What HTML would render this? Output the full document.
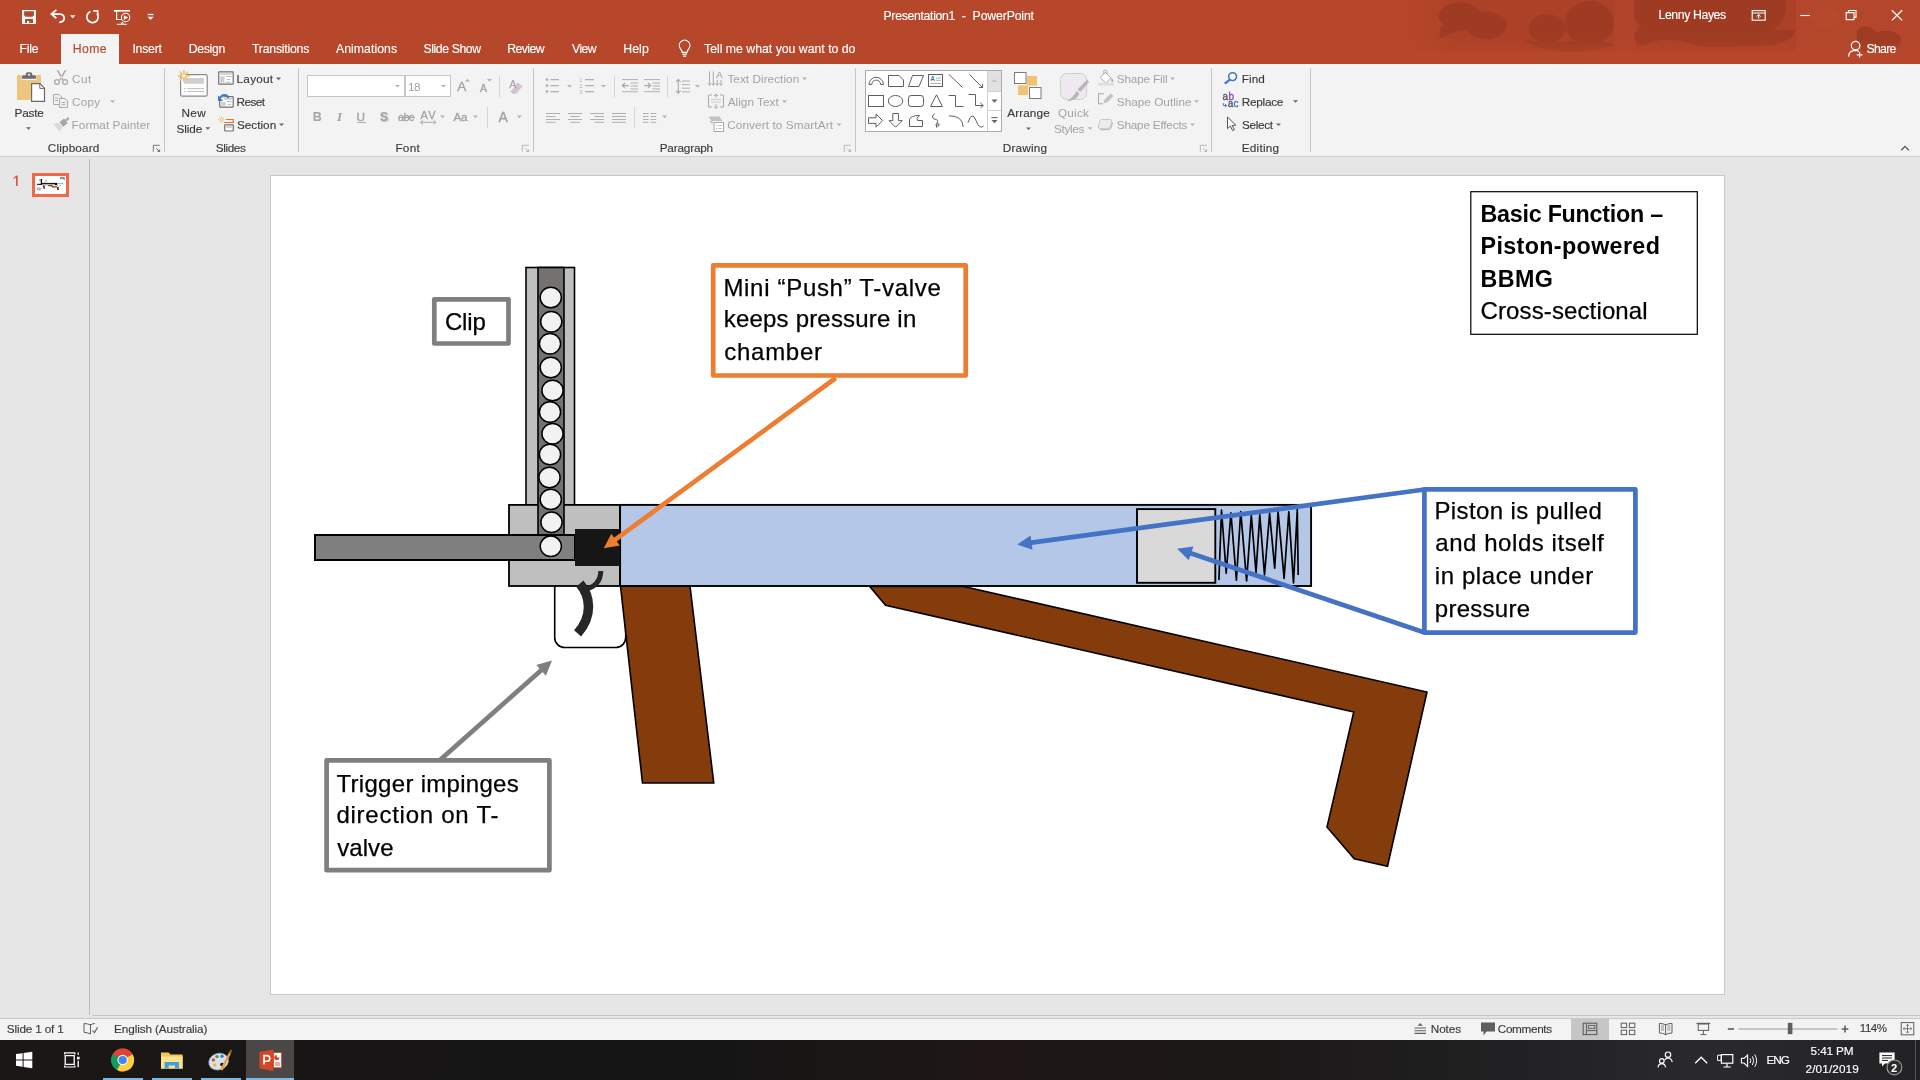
<!DOCTYPE html>
<html><head><meta charset="utf-8"><title>Presentation1 - PowerPoint</title>
<style>
html,body{margin:0;padding:0;background:#e6e6e6;}
body{width:1920px;height:1080px;overflow:hidden;position:relative;font-family:"Liberation Sans",sans-serif;}
#app{position:absolute;left:0;top:0;width:1920px;height:1080px;overflow:hidden;background:#e6e6e6;}
.t{position:absolute;white-space:pre;line-height:20px;height:20px;}
.r{position:absolute;}
#tx{position:absolute;left:0;top:0;width:1920px;height:1080px;will-change:transform;}
svg.ov{position:absolute;left:0;top:0;width:1920px;height:1080px;overflow:visible;}
</style></head><body><div id="app">
<div class="r" style="left:0px;top:0px;width:1920px;height:64px;background:#B7472A;"></div>
<svg class="ov" viewBox="0 0 1920 1080">
<defs>
<linearGradient id="bgf" x1="0" y1="0" x2="1" y2="0"><stop offset="0" stop-color="#AD4127" stop-opacity="0"/><stop offset="1" stop-color="#AD4127" stop-opacity="1"/></linearGradient>
<linearGradient id="vf" x1="0" y1="0" x2="0" y2="1"><stop offset="0" stop-color="#B7472A" stop-opacity="0"/><stop offset="0.72" stop-color="#B7472A" stop-opacity="0"/><stop offset="1" stop-color="#B7472A" stop-opacity="0.45"/></linearGradient>
<clipPath id="tb"><rect x="1380" y="0" width="540" height="51.4"/></clipPath></defs>
<g clip-path="url(#tb)">
<rect x="1400" y="0" width="60" height="52" fill="url(#bgf)"/>
<rect x="1460" y="0" width="460" height="52" fill="#AD4127"/>
<rect x="1614" y="0" width="22" height="52" fill="#B1442A"/>
<rect x="1796" y="0" width="124" height="52" fill="#B4472B"/>
<filter id="sb" x="-5%" y="-20%" width="110%" height="140%"><feGaussianBlur stdDeviation="0.7"/></filter><g fill="#9E3A24" filter="url(#sb)">
<ellipse cx="1460" cy="16.5" rx="21" ry="14.2"/><ellipse cx="1486" cy="25.3" rx="21" ry="13.6"/><path d="M1441 26 L1439.4 38.6 L1458 31Z"/>
<ellipse cx="1547" cy="28.6" rx="18.5" ry="14.4"/><ellipse cx="1589.5" cy="23" rx="24.5" ry="22"/><path d="M1524 39 Q1540 44 1560 42 L1600 40 L1614 45 Q1590 53 1560 51 Q1535 50 1524 39Z"/>
<path d="M1634 0 H1786 Q1788 20 1773 30 L1795 30 Q1792 44 1760 46.5 L1700 47 Q1680 38 1660 40 L1637 47 L1634 34 L1641 26 L1634 18Z"/>
<path d="M1856.5 36 Q1856 26 1866 26.4 Q1873 27 1876 32.6 Q1882 30 1890 31 Q1901.5 33 1901 42 Q1899 50 1886 52 L1864 52 Q1857 44 1856.5 36Z"/>
</g>
<ellipse cx="1826" cy="17" rx="14" ry="10" fill="#B94D30" opacity="0.4"/>
<rect x="1380" y="0" width="540" height="52" fill="url(#vf)"/>
</g></svg>
<div class="r" style="left:61px;top:34px;width:58px;height:30px;background:#F3F3F3;"></div>
<svg class="ov" viewBox="0 0 1920 1080" fill="none" stroke="#fff" stroke-width="1.3">
<!-- save -->
<path fill="#fff" stroke="none" fill-rule="evenodd" d="M22 10 H36 V23.2 Q36 24 35.2 24 H22.8 Q22 24 22 23.2Z M24.1 11.2 V15.8 H25.1 V16.8 H32.9 V15.8 H33.9 V11.2Z M25 19 V22.9 H27 V20.9 H29.1 V22.9 H33 V19Z"/>
<!-- undo -->
<path d="M51.6 14.1 H60 Q64.2 14.4 64.2 18.3 Q64.2 22 59.2 22.3" stroke-width="1.8"/>
<path d="M56.4 9.9 L51.4 14.1 L56.4 18.3" stroke-width="1.8"/>
<path d="M70 15.2 H75.4 L72.7 18.2Z" fill="#fff" stroke="none"/>
<!-- redo -->
<path d="M90.4 11.6 A5.7 5.7 0 1 0 97 13.4" stroke-width="1.7"/>
<path d="M93.2 10.9 H97.7 V15.4" stroke-width="1.6"/>
<!-- present from beginning -->
<path d="M113.9 10.8 H130" stroke-width="1.6"/>
<path d="M116.6 11 V19.5 H121.2" stroke-width="1.2"/>
<path d="M116.9 24.3 H127 M121 24.3 L122.3 22 L123.6 24.3" stroke-width="1"/>
<circle cx="125.6" cy="17.5" r="4.2" stroke-width="1.1"/>
<path d="M123.9 15.2 L128.2 17.5 L123.9 19.8Z" fill="#fff" stroke="none"/>
<!-- customize qat -->
<path d="M147.7 14.5 H153.4" stroke-width="1.3"/>
<path d="M147.5 16.8 H153.6 L150.55 20.1Z" fill="#fff" stroke="none"/>
<!-- bulb -->
<path d="M682.2 52.4 Q682 50.4 680.6 49 A5.3 5.3 0 1 1 688.6 49 Q687.2 50.4 687 52.4 Z" stroke-width="1.2"/>
<path d="M682.2 54.1 H687 M683 56.2 H686.2" stroke-width="1.2"/>
<!-- ribbon display options -->
<rect x="1752.2" y="10.6" width="13" height="9.6" stroke-width="1.1"/>
<path d="M1752.2 13 H1765.2 M1758.7 18.6 V14.6 M1756.6 16.6 L1758.7 14.5 L1760.8 16.6" stroke-width="1"/>
<!-- min -->
<path d="M1800.3 15.5 H1810" stroke-width="1.1"/>
<!-- restore -->
<path d="M1846.2 12.6 H1854 V19.6 H1846.2Z M1848.4 12.6 V10.5 H1856 V17.4 H1854" stroke-width="1.1"/>
<!-- close -->
<path d="M1891.8 10.2 L1902.2 20.4 M1902.2 10.2 L1891.8 20.4" stroke-width="1.2"/>
<!-- share person -->
<circle cx="1855.6" cy="45.6" r="4.3" stroke-width="1.2"/>
<path d="M1848.6 56.6 Q1849 50.6 1855 50.4 Q1857.6 50.4 1859 51.6" stroke-width="1.2"/>
<path d="M1859.6 52.2 V57.6 M1856.8 54.9 H1862.4" stroke-width="1.2"/>
</svg>
<div class="r" style="left:0px;top:64px;width:1920px;height:92px;background:#F3F3F3;"></div>
<div class="r" style="left:0px;top:156px;width:1920px;height:1px;background:#D2D2D2;"></div>
<div class="r" style="left:164px;top:68px;width:1px;height:84px;background:#C6C6C6;"></div>
<div class="r" style="left:298px;top:68px;width:1px;height:84px;background:#C6C6C6;"></div>
<div class="r" style="left:533px;top:68px;width:1px;height:84px;background:#C6C6C6;"></div>
<div class="r" style="left:855px;top:68px;width:1px;height:84px;background:#C6C6C6;"></div>
<div class="r" style="left:1211px;top:68px;width:1px;height:84px;background:#C6C6C6;"></div>
<div class="r" style="left:1310px;top:68px;width:1px;height:84px;background:#C6C6C6;"></div>
<div class="r" style="left:499px;top:76px;width:1px;height:21px;background:#D4D4D4;"></div>
<div class="r" style="left:487px;top:107px;width:1px;height:21px;background:#D4D4D4;"></div>
<div class="r" style="left:614px;top:76px;width:1px;height:21px;background:#D4D4D4;"></div>
<div class="r" style="left:667px;top:76px;width:1px;height:21px;background:#D4D4D4;"></div>
<div class="r" style="left:634px;top:107px;width:1px;height:21px;background:#D4D4D4;"></div>
<div class="r" style="left:307px;top:75px;width:98px;height:22px;background:#fff;border:1px solid #C6C6C6;box-sizing:border-box;"></div>
<div class="r" style="left:405px;top:75px;width:46px;height:22px;background:#fff;border:1px solid #C6C6C6;box-sizing:border-box;"></div>
<div class="r" style="left:357px;top:122px;width:9px;height:1px;background:#ADADAD;"></div>
<div class="r" style="left:398px;top:117.2px;width:16.5px;height:1px;background:#A3A3A3;"></div>
<div class="r" style="left:865px;top:70px;width:137px;height:62px;background:#fff;border:1px solid #ABABAB;box-sizing:border-box;"></div>
<div class="r" style="left:987px;top:71px;width:14px;height:20px;background:#E1E1E1;"></div>
<div class="r" style="left:987px;top:71px;width:1px;height:60px;background:#D0D0D0;"></div>
<div class="r" style="left:988px;top:91px;width:13px;height:1px;background:#D0D0D0;"></div>
<div class="r" style="left:988px;top:110px;width:13px;height:1px;background:#D0D0D0;"></div>
<svg class="ov" viewBox="0 0 1920 1080" fill="none" stroke-linejoin="miter">
<path d="M26 127.2 H31 L28.5 129.82Z" fill="#666" stroke="none"/>
<path d="M205.3 127.2 H210.3 L207.8 129.82Z" fill="#666" stroke="none"/>
<path d="M276 77.6 H281 L278.5 80.22Z" fill="#666" stroke="none"/>
<path d="M279 123.5 H284 L281.5 126.12Z" fill="#666" stroke="none"/>
<path d="M1026 127.4 H1031 L1028.5 130.03Z" fill="#666" stroke="none"/>
<path d="M1293 100.2 H1298 L1295.5 102.83Z" fill="#666" stroke="none"/>
<path d="M1276 123.5 H1281 L1278.5 126.12Z" fill="#666" stroke="none"/>
<path d="M110 100.3 H115 L112.5 102.92Z" fill="#B4B4B4" stroke="none"/>
<path d="M395 85 H400 L397.5 87.62Z" fill="#B4B4B4" stroke="none"/>
<path d="M441 85 H446 L443.5 87.62Z" fill="#B4B4B4" stroke="none"/>
<path d="M440 115.6 H445 L442.5 118.22Z" fill="#B4B4B4" stroke="none"/>
<path d="M473 115.6 H478 L475.5 118.22Z" fill="#B4B4B4" stroke="none"/>
<path d="M517 115.6 H522 L519.5 118.22Z" fill="#B4B4B4" stroke="none"/>
<path d="M567 85 H572 L569.5 87.62Z" fill="#B4B4B4" stroke="none"/>
<path d="M601 85 H606 L603.5 87.62Z" fill="#B4B4B4" stroke="none"/>
<path d="M695 85 H700 L697.5 87.62Z" fill="#B4B4B4" stroke="none"/>
<path d="M662 115.6 H667 L664.5 118.22Z" fill="#B4B4B4" stroke="none"/>
<path d="M802 77.6 H807 L804.5 80.22Z" fill="#B4B4B4" stroke="none"/>
<path d="M782 100.3 H787 L784.5 102.92Z" fill="#B4B4B4" stroke="none"/>
<path d="M836.5 123.5 H841.5 L839.0 126.12Z" fill="#B4B4B4" stroke="none"/>
<path d="M1087.7 127.2 H1092.7 L1090.2 129.82Z" fill="#B4B4B4" stroke="none"/>
<path d="M1170 77.6 H1175 L1172.5 80.22Z" fill="#B4B4B4" stroke="none"/>
<path d="M1194 100.3 H1199 L1196.5 102.92Z" fill="#B4B4B4" stroke="none"/>
<path d="M1190 123.5 H1195 L1192.5 126.12Z" fill="#B4B4B4" stroke="none"/>
<path d="M153.3 151.8 V145.3 H159.8" stroke="#777" stroke-width="1"/><path d="M156.3 148.3 L159.60000000000002 151.60000000000002" stroke="#777" stroke-width="1"/><path d="M156.9 152.10000000000002 H160.10000000000002 V148.9Z" fill="#777" stroke="none"/>
<path d="M522.3 151.8 V145.3 H528.8" stroke="#B8B8B8" stroke-width="1"/><path d="M525.3 148.3 L528.5999999999999 151.60000000000002" stroke="#B8B8B8" stroke-width="1"/><path d="M525.9 152.10000000000002 H529.0999999999999 V148.9Z" fill="#B8B8B8" stroke="none"/>
<path d="M844.3 151.8 V145.3 H850.8" stroke="#B8B8B8" stroke-width="1"/><path d="M847.3 148.3 L850.5999999999999 151.60000000000002" stroke="#B8B8B8" stroke-width="1"/><path d="M847.9 152.10000000000002 H851.0999999999999 V148.9Z" fill="#B8B8B8" stroke="none"/>
<path d="M1200.3 151.8 V145.3 H1206.8" stroke="#B8B8B8" stroke-width="1"/><path d="M1203.3 148.3 L1206.6 151.60000000000002" stroke="#B8B8B8" stroke-width="1"/><path d="M1203.8999999999999 152.10000000000002 H1207.1 V148.9Z" fill="#B8B8B8" stroke="none"/>
<path d="M1901.2 150.2 L1905 146.4 L1908.8 150.2" stroke="#555" stroke-width="1.3"/>
<rect x="17" y="75" width="24" height="25" rx="1.2" fill="#EEC57C" stroke="none"/>
<rect x="21.6" y="75" width="14.8" height="5" fill="#F3F3F3" stroke="none"/>
<path d="M22 78.7 V76.6 Q22 75.3 23.4 75.3 H25.8 V74 Q25.8 72.2 27.6 72.2 H30.4 Q32.2 72.2 32.2 74 V75.3 H34.6 Q36 75.3 36 76.6 V78.7Z" fill="#6E6E6E" stroke="none"/><circle cx="29" cy="74.8" r="1.1" fill="#F3F3F3" stroke="none"/>
<path d="M31.6 83.7 H40 L44.5 88.2 V101.3 H31.6Z" fill="#fff" stroke="#6A6A6A" stroke-width="1.2"/><path d="M39.8 84 V88.4 H44.2" stroke="#6A6A6A" stroke-width="1" fill="none"/>
<path d="M56.6 70.2 L58.4 70.2 L63.6 79.6 L62.4 80.4Z M66.4 70.2 L64.6 70.2 L59.4 79.6 L60.6 80.4Z" fill="#A9A9A9" stroke="none"/>
<g stroke="#A9A9A9" stroke-width="1.3"><circle cx="57" cy="82" r="2.4"/><circle cx="65.1" cy="82" r="2.4"/></g>
<g stroke="#A9A9A9" stroke-width="1"><path d="M53.5 94.5 H59 L61.5 97 V104.5 H53.5Z" fill="#F3F3F3"/><path d="M59.5 98.5 H65 L67.5 101 V107.5 H59.5Z" fill="#F3F3F3"/><path d="M55 98 H58 M55 100.5 H58 M61.5 102.5 H65.5 M61.5 104.8 H65.5"/></g>
<path d="M64.6 119.9 L68 116.9 L69.6 118.8 L66.3 121.8Z" fill="#ADADAD" stroke="none"/><path d="M59.5 122.2 L64 118.6 L67.6 123.2 L63.1 126.8Z" fill="#A6A6A6" stroke="none"/><path d="M58.7 122.9 L62.7 127.7 L59.4 131.4 L53.2 123.4Z" fill="#DBD7DB" stroke="none"/>
<rect x="180.6" y="74.7" width="26.6" height="21.4" rx="1.6" fill="#fff" stroke="#8A8A8A" stroke-width="1.2"/>
<rect x="183.9" y="78" width="20.1" height="5.8" fill="#D0D0D0" stroke="none"/>
<path d="M184 88.6 H185.8 M187.2 88.6 H204 M184 91.4 H185.8 M187.2 91.4 H204" stroke="#BEBEBE" stroke-width="1"/>
<g stroke="#EEC37B" stroke-width="1.7"><path d="M183.9 69.9 V81.8 M178 75.85 H189.8 M179.7 71.65 L188.1 80.05 M188.1 71.65 L179.7 80.05"/></g><circle cx="183.9" cy="75.85" r="1.7" fill="#FAF6EE" stroke="none"/>
<rect x="218.7" y="71.9" width="14.5" height="12.3" rx="0.6" fill="#fff" stroke="#707070" stroke-width="1.2"/><rect x="220.2" y="73.3" width="11.6" height="1.5" fill="#C8C8C8" stroke="none"/><rect x="220.2" y="76.3" width="4.4" height="6.4" fill="#CFCFCF" stroke="none"/><path d="M226 76.6 H231.8 M226.6 79.6 H230 M226 82.3 H230.4" stroke="#B0B0B0" stroke-width="0.9"/>
<rect x="219.7" y="96.7" width="13.5" height="10.4" rx="0.6" fill="#fff" stroke="#707070" stroke-width="1.2"/><rect x="224" y="98.1" width="8" height="1.5" fill="#C8C8C8" stroke="none"/><rect x="221" y="101.8" width="4.6" height="3.9" fill="#CFCFCF" stroke="none"/><path d="M227 101.6 H231.8 M227.6 104.4 H231" stroke="#B0B0B0" stroke-width="0.9"/>
<path d="M217.6 94.6 H224.6 V96.4 H217.6Z" fill="#F3F3F3" stroke="none"/><path d="M228.4 98 Q227.6 94.9 224.4 94.9 Q221 95.1 220 98.6" stroke="#3E7BC4" stroke-width="1.8" fill="none"/><path d="M218 95.6 V100.9 H223.2Z" fill="#3E7BC4" stroke="none"/>
<g stroke="#EEC37B" stroke-width="0.9"><path d="M221.5 116.3 V122.9 M218.2 119.6 H224.8 M219.2 117.3 L223.8 121.9 M223.8 117.3 L219.2 121.9"/></g><circle cx="221.5" cy="119.6" r="0.9" fill="#FAF6EE" stroke="none"/>
<path d="M226 119.5 H233.3 V122.5 H224.2" stroke="#E8722A" stroke-width="1.2" fill="none"/><rect x="224.7" y="124.9" width="8.6" height="6.1" rx="0.5" fill="#fff" stroke="#707070" stroke-width="1.2"/><rect x="226.2" y="126.3" width="5.6" height="1.6" fill="#C8C8C8" stroke="none"/>
<path d="M465 81.6 H470 L467.5 78.8Z" fill="#B4B4B4" stroke="none"/>
<path d="M487 79 H492 L489.5 81.8Z" fill="#B4B4B4" stroke="none"/>
<path d="M511.6 90.2 L517.6 82.6 L522.6 86 L516.6 93.6 H513Z" fill="#D3BFD0" stroke="none" opacity="0.9"/><path d="M510.8 91 L514.6 93.8" stroke="#C9B6C8" stroke-width="1.2"/>
<path d="M420.5 122.3 H436 M423 120 L420.6 122.3 L423 124.6 M433.5 120 L435.9 122.3 L433.5 124.6" stroke="#A9A9A9" stroke-width="1"/>
<g fill="#B0B0B0" stroke="none"><circle cx="547" cy="79.6" r="1.4"/><circle cx="547" cy="85.6" r="1.4"/><circle cx="547" cy="91.6" r="1.4"/></g>
<path d="M550.5 79.6 H559 M550.5 85.6 H559 M550.5 91.6 H559" stroke="#B0B0B0" stroke-width="1.1"/>
<g fill="#A9A9A9" stroke="none" font-family="Liberation Sans" font-size="5"><text x="579.6" y="81.6">1</text><text x="579.6" y="87.6">2</text><text x="579.6" y="93.6">3</text></g>
<path d="M585 79.6 H594 M585 85.6 H594 M585 91.6 H594" stroke="#B0B0B0" stroke-width="1.1"/>
<path d="M622 79.6 H638 M630.5 83 H638 M630.5 86 H638 M630.5 89 H638 M622 91.7 H638" stroke="#B0B0B0" stroke-width="1"/><path d="M622.4 85.6 H628.6 M625 83 L622.4 85.6 L625 88.2" stroke="#A9A9A9" stroke-width="1.2"/>
<path d="M644 79.6 H660 M652.5 83 H660 M652.5 86 H660 M652.5 89 H660 M644 91.7 H660" stroke="#B0B0B0" stroke-width="1"/><path d="M644.4 85.6 H650.6 M648 83 L650.6 85.6 L648 88.2" stroke="#A9A9A9" stroke-width="1.2"/>
<path d="M682 81 H690 M682 84.6 H690 M682 88.2 H690 M682 91.8 H690" stroke="#B0B0B0" stroke-width="1"/><path d="M678.3 79.6 V93 M676 82 L678.3 79.4 L680.6 82 M676 90.6 L678.3 93.2 L680.6 90.6" stroke="#A9A9A9" stroke-width="1.1"/>
<path d="M546 113.5 H560 M546 116.5 H555.5 M546 119.5 H560 M546 122.3 H555.5 " stroke="#B0B0B0" stroke-width="1"/>
<path d="M568.0 113.5 H582.0 M570.25 116.5 H579.75 M568.0 119.5 H582.0 M570.25 122.3 H579.75 " stroke="#B0B0B0" stroke-width="1"/>
<path d="M590 113.5 H604 M594.5 116.5 H604.0 M590 119.5 H604 M594.5 122.3 H604.0 " stroke="#B0B0B0" stroke-width="1"/>
<path d="M612 113.5 H626 M612 116.5 H626 M612 119.5 H626 M612 122.3 H626 " stroke="#B0B0B0" stroke-width="1"/>
<path d="M643 113.5 H648.6 M650.6 113.5 H656.2 M643 116.5 H648.6 M650.6 116.5 H656.2 M643 119.5 H648.6 M650.6 119.5 H656.2 M643 122.3 H648.6 M650.6 122.3 H656.2" stroke="#B0B0B0" stroke-width="1"/>
<path d="M709.5 71.5 V85 M713.3 71.5 V85 M717.2 80 V85 M721 80 V85" stroke="#A9A9A9" stroke-width="1"/><path d="M708 83.4 L709.5 85.4 L711 83.4 M711.8 83.4 L713.3 85.4 L714.8 83.4 M715.7 83.4 L717.2 85.4 L718.7 83.4 M719.5 83.4 L721 85.4 L722.5 83.4" stroke="#A9A9A9" stroke-width="0.9"/>
<path d="M712 95 H708.5 V107 H712 M720 95 H723.5 V107 H720" stroke="#A9A9A9" stroke-width="1"/><path d="M711 99.5 H721 M711 102 H721" stroke="#D6C6D6" stroke-width="1"/><path d="M716 94 V98 M714 96 L716 94 L718 96 M716 104 V108.4 M714 106.4 L716 108.4 L718 106.4" stroke="#A9A9A9" stroke-width="1"/>
<path d="M708.5 116.5 H719.5 L722.5 121 H711.5Z" fill="#C2C2C2" stroke="none"/><path d="M709 121 L712.6 124.6 V121Z" fill="#C2C2C2" stroke="none"/><rect x="714" y="122.5" width="9.5" height="9" fill="#fff" stroke="#A9A9A9" stroke-width="1"/><path d="M716 125.5 H717 M718.5 125.5 H721.6 M716 128.5 H717 M718.5 128.5 H721.6" stroke="#C8A8C8" stroke-width="1"/>
<g stroke="#5F5F5F" stroke-width="1">
<path d="M869 84.5 A7.2 7.2 0 0 1 883.4 84.5 H880.6 A4.4 4.4 0 0 0 871.8 84.5Z"/>
<path d="M888.5 75.5 H899 L903.5 80 V86.5 H888.5Z"/>
<path d="M912.5 75.5 H923.5 L919 86.5 H908.5Z"/>
<rect x="928.5" y="74.5" width="14" height="12"/>
<path d="M949 74.5 L962.5 87.5"/>
<path d="M969.5 74.5 L982.5 87.5 M979 87.5 H982.6 V84"/>
<rect x="868.5" y="95.5" width="15" height="11"/>
<ellipse cx="895.5" cy="101" rx="7.2" ry="5.5"/>
<rect x="908.5" y="95.5" width="15" height="11" rx="2.6"/>
<path d="M936.5 94.8 L942.5 106.5 H930.5Z"/>
<path d="M948.5 95.5 H955.5 V106.5 H963.5"/>
<path d="M968.5 94.5 H975.5 V105.5 H983 M980.5 103 L983.3 105.5 L980.5 108"/>
<path d="M868.5 117.8 H876 V114 L882.6 120.6 L876 127.2 V123.4 H868.5Z"/>
<path d="M892.8 113.5 H898.4 V120.6 H902.2 L895.6 127.2 L889 120.6 H892.8Z"/>
<path d="M909.5 126.5 V119.5 Q910.5 115.5 919.5 115.5 Q915.5 118.5 917.5 120.5 H922.5 V126.5Z"/>
<path d="M934.5 113.5 Q930 118 935 119.2 Q939.5 120 936.6 123.5 Q934.8 126 937.8 126.2 Q940 125.6 938.8 123.8 Q937 122.8 936.6 125 V127.6"/>
<path d="M949 115.8 Q962.8 115.8 963.2 127"/>
<path d="M968 122.6 Q972 110 976 120.6 Q979.5 130 983.6 126"/>
</g>
<text x="930.2" y="81.4" font-size="6.5" font-weight="bold" fill="#3B78C3" stroke="none" font-family="Liberation Sans">A</text><path d="M936 78 H941 M936 80.3 H941 M930.5 83.5 H941" stroke="#9A9A9A" stroke-width="0.8"/>
<path d="M991.6 82 H997.4 L994.5 79Z" fill="#C3C3C3" stroke="none"/>
<path d="M991.4 99.6 H997.6 L994.5 102.8Z" fill="#666" stroke="none"/>
<path d="M991.4 117.6 H997.6" stroke="#666" stroke-width="1.1"/><path d="M991.4 120 H997.6 L994.5 123.2Z" fill="#666" stroke="none"/>
<rect x="1027" y="76" width="10" height="9.6" fill="#EEC371" stroke="none"/><rect x="1018" y="85.4" width="10" height="9.6" fill="#EEC371" stroke="none"/>
<rect x="1014.5" y="72.5" width="11.5" height="11" fill="#fff" stroke="#7A7A7A" stroke-width="1"/><rect x="1029.5" y="87.5" width="11.5" height="11" fill="#fff" stroke="#7A7A7A" stroke-width="1"/>
<rect x="1060.5" y="73.5" width="26" height="26" rx="6" fill="#EFEAF0" stroke="#CFCFCF" stroke-width="1"/>
<path d="M1089 82 L1080.5 92 L1077.5 89.5 L1087 79.5Z" fill="#B7B7B7" stroke="none"/><path d="M1076.4 91 L1079.4 93.6 Q1077 100.6 1066.5 101.4 Q1073.5 97.5 1076.4 91Z" fill="#B7B7B7" stroke="none"/>
<path d="M1100.2 77.6 L1105.4 72.4 L1111.2 78.2 L1106 83.4Z" stroke="#A9A9A9" stroke-width="1" fill="#fff"/><path d="M1103.8 74 V70.6 Q1105.6 69.4 1107 71.2 V74" stroke="#A9A9A9" stroke-width="0.9"/><path d="M1111.6 78 Q1114.4 80.6 1112.6 82.6 Q1110.6 81 1111.6 78Z" fill="#A9A9A9" stroke="none"/><rect x="1098" y="82.8" width="16" height="3" fill="#E4DCE4" stroke="none"/>
<path d="M1104 93.8 H1098.5 V103.8 H1103" stroke="#A9A9A9" stroke-width="1"/><path d="M1103.6 103.2 L1104.6 99.6 L1110.8 93.4 L1113.4 96 L1107.2 102.2Z" fill="#C2C2C2" stroke="none"/>
<path d="M1101.5 119.5 H1110 Q1112.5 119.5 1111.8 122 L1110 127 Q1109.4 128.6 1107.6 128.6 H1100 Q1097.6 128.6 1098.5 126 L1099.6 121.4 Q1100 119.5 1101.5 119.5Z" fill="#EFEAF0" stroke="#C9C9C9" stroke-width="1"/><path d="M1100 129.6 H1108 Q1110.4 129.6 1111 127.6 L1112.6 122.6" stroke="#BDBDBD" stroke-width="1.3"/>
<circle cx="1232.6" cy="76.6" r="3.9" stroke="#3B78C3" stroke-width="1.6" fill="#fff"/><path d="M1229.6 79.8 L1224.8 83.6" stroke="#3B78C3" stroke-width="2.2"/>
<path d="M1223.3 103.2 V105.6 H1226.4 M1224.9 104 L1226.7 105.6 L1224.9 107.2" stroke="#3B78C3" stroke-width="1" fill="none"/>
<path d="M1227.5 117 V128.6 L1230.4 126 L1232.6 130.6 L1234.4 129.8 L1232.2 125.4 L1235.8 125.2Z" fill="#fff" stroke="#555" stroke-width="1"/>
</svg>
<div class="r" style="left:0px;top:157px;width:1920px;height:861px;background:#E6E6E6;"></div>
<div class="r" style="left:89px;top:159px;width:1px;height:856px;background:#BDBDBD;"></div>
<div class="r" style="left:32px;top:173px;width:37px;height:24px;background:#fff;border:3px solid #F0694A;box-sizing:border-box;"></div>
<div class="r" style="left:270px;top:175px;width:1455px;height:820px;background:#fff;border:1px solid #C8C8C8;box-sizing:border-box;"></div>
<svg class="ov" viewBox="0 0 1920 1080" fill="none">
<g shape-rendering="geometricPrecision"><path d="M37 184.4 H42" stroke="#222" stroke-width="1.2"/><path d="M41.4 179 V185" stroke="#111" stroke-width="1.4"/><path d="M39.3 179.4 H40.6 M39.3 180.5 H40.6" stroke="#666" stroke-width="0.7"/><path d="M42 183.6 H57" stroke="#1a1a1a" stroke-width="1.4"/><rect x="55" y="183.2" width="2.1" height="1.9" fill="#000"/><path d="M43 185 H55" stroke="#8FAADC" stroke-width="0.9"/><path d="M57 183.6 H63.2" stroke="#8FAADC" stroke-width="1"/><path d="M63.5 183.5 V186" stroke="#C9D6EE" stroke-width="0.6"/><path d="M43.3 185.4 L44.5 188.8" stroke="#843C0C" stroke-width="1.9"/><path d="M48.2 185.6 H51.6 L52.6 186.8 L57 186.9" stroke="#843C0C" stroke-width="1.2" fill="none"/><path d="M57.9 187 L58 190" stroke="#843C0C" stroke-width="1.9"/><circle cx="57.4" cy="185.6" r="0.5" fill="#4472C4"/><path d="M59.4 185.6 H61" stroke="#999" stroke-width="0.6"/><path d="M44.9 183 L46.3 181.6" stroke="#ED7D31" stroke-width="0.9"/><path d="M45 180.5 H47" stroke="#999" stroke-width="0.6"/><path d="M60 177.4 H64.8 M60 178.6 H64.8 M63.6 179.6 H64.8" stroke="#666" stroke-width="0.8"/><path d="M37 188.2 H41.6 M37 189.3 H40.6" stroke="#777" stroke-width="0.7"/><path d="M37 190.4 H42" stroke="#bbb" stroke-width="0.5"/></g>
<path d="M13.4 178 L16.6 175.5 H17.6 V186 H16.15 V177.3 L13.9 179Z" fill="#D24726"/>
<path d="M869.75 586.5 L963.75 586.5 L1427 692 L1387.5 866.25 L1354.25 858.75 L1327 827 L1353.75 712 L885.6 605.25Z" fill="#843C0C" stroke="#000" stroke-width="1.6" stroke-linejoin="miter"/>
<rect x="554.7" y="578" width="71" height="69.5" rx="10" fill="#fff" stroke="#000" stroke-width="1.6"/>
<path d="M620.5 586 L690 586 L713.75 783 L642.5 783Z" fill="#843C0C" stroke="#000" stroke-width="1.6"/>
<rect x="526" y="267.5" width="48.5" height="250" fill="#BFBFBF" stroke="#000" stroke-width="1.6"/>
<rect x="509" y="504.9" width="111" height="81.1" fill="#BFBFBF" stroke="#000" stroke-width="1.8"/>
<rect x="620.1" y="504.9" width="691" height="81.1" fill="#B4C7E7" stroke="#000" stroke-width="1.9"/>
<rect x="538" y="267.5" width="26" height="269" fill="#767171" stroke="#000" stroke-width="1.6"/>
<rect x="315" y="535" width="260" height="25" fill="#7F7F7F" stroke="#000" stroke-width="2"/>
<ellipse cx="550.75" cy="297.5" rx="10.6" ry="10.2" fill="#F2F2F2" stroke="#000" stroke-width="1.5"/>
<ellipse cx="551.25" cy="321.75" rx="10.6" ry="10.2" fill="#F2F2F2" stroke="#000" stroke-width="1.5"/>
<ellipse cx="550" cy="343.75" rx="10.6" ry="10.2" fill="#F2F2F2" stroke="#000" stroke-width="1.5"/>
<ellipse cx="550.75" cy="367.5" rx="10.6" ry="10.2" fill="#F2F2F2" stroke="#000" stroke-width="1.5"/>
<ellipse cx="552.5" cy="390.5" rx="10.6" ry="10.2" fill="#F2F2F2" stroke="#000" stroke-width="1.5"/>
<ellipse cx="550" cy="412" rx="10.6" ry="10.2" fill="#F2F2F2" stroke="#000" stroke-width="1.5"/>
<ellipse cx="552.5" cy="433.75" rx="10.6" ry="10.2" fill="#F2F2F2" stroke="#000" stroke-width="1.5"/>
<ellipse cx="550" cy="454.5" rx="10.6" ry="10.2" fill="#F2F2F2" stroke="#000" stroke-width="1.5"/>
<ellipse cx="549.5" cy="477.5" rx="10.6" ry="10.2" fill="#F2F2F2" stroke="#000" stroke-width="1.5"/>
<ellipse cx="550.75" cy="499.4" rx="10.6" ry="10.2" fill="#F2F2F2" stroke="#000" stroke-width="1.5"/>
<ellipse cx="551.5" cy="522.3" rx="10.6" ry="10.2" fill="#F2F2F2" stroke="#000" stroke-width="1.5"/>
<ellipse cx="550.8" cy="546.3" rx="10.6" ry="10.2" fill="#F2F2F2" stroke="#000" stroke-width="1.5"/>
<rect x="575" y="529" width="45" height="37" fill="#161616"/>
<path d="M579.8 583.6 C590.5 596 593 616 577.6 633.4" stroke="#262626" stroke-width="9.5" stroke-linecap="butt"/>
<path d="M584.5 589.5 Q600.5 586 600.8 571" stroke="#262626" stroke-width="5" stroke-linecap="butt"/>
<rect x="1137" y="509.1" width="78.3" height="73.7" fill="#D9D9D9" stroke="#000" stroke-width="1.9"/>
<path d="M1218.9 580.1 L1221.5 510.2 L1226.2 573.3 L1230.9 512.8 L1236.4 580.1 L1240.7 511.5 L1246.6 580.9 L1251.3 515.3 L1256.0 572.4 L1259.8 514.9 L1264.5 575.0 L1269.6 513.6 L1274.7 568.1 L1278.1 511.9 L1284.1 578.4 L1288.8 511.9 L1293.5 583.0 L1297.3 509.4 L1298.2 575.0" stroke="#000" stroke-width="1.7" stroke-linejoin="round" stroke-linecap="butt"/>
<path d="M835.7 378.0 L613.9 540.7" stroke="#ED7D31" stroke-width="4.7"/><path d="M603.8 548.2 L611.3 533.8 L619.8 545.4Z" fill="#ED7D31"/>
<rect x="713.2" y="265.3" width="252.5" height="110.2" fill="#fff" stroke="#ED7D31" stroke-width="4.7" stroke-linejoin="round"/>
<path d="M438.9 760.9 L542.6 669.0" stroke="#7F7F7F" stroke-width="4.7"/><path d="M552.0 660.6 L545.9 675.7 L536.3 664.9Z" fill="#7F7F7F"/>
<rect x="326.6" y="760.3" width="222.8" height="109.9" fill="#fff" stroke="#7F7F7F" stroke-width="4.7" stroke-linejoin="round"/>
<rect x="434.3" y="299.3" width="74.2" height="44.2" fill="#fff" stroke="#7F7F7F" stroke-width="4.7" stroke-linejoin="round"/>
<path d="M1424.5 489.5 L1029.6 542.9" stroke="#4472C4" stroke-width="4.7"/><path d="M1017.1 544.6 L1030.6 535.5 L1032.5 549.8Z" fill="#4472C4"/>
<path d="M1424.5 632.5 L1189.2 552.8" stroke="#4472C4" stroke-width="4.7"/><path d="M1177.2 548.8 L1193.4 546.6 L1188.8 560.3Z" fill="#4472C4"/>
<rect x="1424.4" y="489.4" width="211" height="143.2" fill="#fff" stroke="#4472C4" stroke-width="4.7" stroke-linejoin="round"/>
<rect x="1470.8" y="191.7" width="226.5" height="142.6" fill="#fff" stroke="#000" stroke-width="1.2"/>
</svg>
<div class="r" style="left:92px;top:1015px;width:1828px;height:1px;background:#C6C6C6;"></div>
<div class="r" style="left:0px;top:1018px;width:1920px;height:1px;background:#C8C8C8;"></div>
<div class="r" style="left:0px;top:1019px;width:1920px;height:21px;background:#F3F3F3;"></div>
<div class="r" style="left:1571px;top:1019px;width:38px;height:21px;background:#C6C6C6;"></div>
<div class="r" style="left:0px;top:1040px;width:1920px;height:40px;background:linear-gradient(90deg,#1C1717 0%,#171515 20%,#151515 36%,#1E1715 52%,#1B1818 66%,#222224 80%,#2A2A2C 89%,#222224 100%);"></div>
<div class="r" style="left:246px;top:1040px;width:48px;height:40px;background:#4B4746;"></div>
<div class="r" style="left:1915px;top:1040px;width:1px;height:40px;background:#555555;"></div>
<div class="r" style="left:103px;top:1078px;width:40px;height:2px;background:#76B9ED;"></div>
<div class="r" style="left:152px;top:1078px;width:40px;height:2px;background:#76B9ED;"></div>
<div class="r" style="left:201px;top:1078px;width:40px;height:2px;background:#76B9ED;"></div>
<div class="r" style="left:246px;top:1078px;width:48px;height:2px;background:#76B9ED;"></div>
<svg class="ov" viewBox="0 0 1920 1080" fill="none">
<path d="M90.5 1024 V1032.5 M84 1023.5 Q87.5 1023.5 90.5 1025 V1034 Q87.5 1032.4 84 1032.4Z M90.5 1025 Q92.5 1023.6 95 1023.5" stroke="#5E5E5E" stroke-width="1"/><path d="M92.5 1030.6 L94.4 1032.6 L97.6 1027.4" stroke="#5E5E5E" stroke-width="1.1"/>
<path d="M1420.2 1023 L1422.8 1025.8 H1417.6Z" fill="#5E5E5E"/><path d="M1414.5 1028 H1426 M1414.5 1030.7 H1426 M1414.5 1033.4 H1426" stroke="#5E5E5E" stroke-width="1.1"/>
<path d="M1481 1022.5 H1495 V1031.5 H1486.5 L1483.5 1035.4 V1031.5 H1481Z" fill="#5E5E5E"/>
<rect x="1583.2" y="1023.2" width="13.6" height="11.4" stroke="#5E5E5E" stroke-width="1.1"/><path d="M1586.4 1023.2 V1034.6 M1586.4 1030.6 H1596.8" stroke="#5E5E5E" stroke-width="1"/><rect x="1588.4" y="1025.4" width="6.4" height="3.2" stroke="#5E5E5E" stroke-width="0.9"/>
<rect x="1621.2" y="1023.2" width="5.4" height="4.4" stroke="#5E5E5E" stroke-width="1"/>
<rect x="1621.2" y="1030.2" width="5.4" height="4.4" stroke="#5E5E5E" stroke-width="1"/>
<rect x="1629.4" y="1023.2" width="5.4" height="4.4" stroke="#5E5E5E" stroke-width="1"/>
<rect x="1629.4" y="1030.2" width="5.4" height="4.4" stroke="#5E5E5E" stroke-width="1"/>
<path d="M1665.6 1024.6 V1035 M1659.4 1023.4 Q1663 1023.4 1665.6 1024.8 Q1668.4 1023.4 1672 1023.4 V1033 Q1668.4 1033 1665.6 1034.6 Q1663 1033 1659.4 1033Z" stroke="#5E5E5E" stroke-width="1"/><path d="M1661 1026 H1664 M1661 1028 H1664 M1661 1030 H1664 M1667.4 1026 H1670.4 M1667.4 1028 H1670.4 M1667.4 1030 H1670.4" stroke="#5E5E5E" stroke-width="0.7"/>
<path d="M1696.6 1023.4 H1710.2" stroke="#5E5E5E" stroke-width="1.2"/><rect x="1698.2" y="1024" width="10.4" height="6.4" stroke="#5E5E5E" stroke-width="1"/><path d="M1703.4 1030.4 V1034.4 M1700.4 1034.6 H1706.4" stroke="#5E5E5E" stroke-width="1"/>
<path d="M1727.8 1029 H1734" stroke="#5E5E5E" stroke-width="1.6"/><path d="M1738.4 1029 H1837.4" stroke="#9A9A9A" stroke-width="1"/><rect x="1787.8" y="1022.8" width="4.6" height="11.4" fill="#5E5E5E"/><path d="M1841.6 1029 H1848.4 M1845 1025.6 V1032.4" stroke="#5E5E5E" stroke-width="1.6"/>
<rect x="1901.2" y="1022.6" width="12.6" height="12.2" stroke="#5E5E5E" stroke-width="1"/><path d="M1907.5 1024.6 V1032.8 M1903.4 1028.7 H1911.6 M1906.2 1025.8 L1907.5 1024.4 L1908.8 1025.8 M1906.2 1031.6 L1907.5 1033 L1908.8 1031.6 M1904.6 1027.4 L1903.2 1028.7 L1904.6 1030 M1910.4 1027.4 L1911.8 1028.7 L1910.4 1030" stroke="#5E5E5E" stroke-width="0.8"/>
<path d="M16 1054.1 L22.6 1053.2 V1059.4 H16Z M23.6 1053 L32.3 1051.7 V1059.4 H23.6Z M16 1060.4 H22.6 V1066.7 L16 1065.8Z M23.6 1060.4 H32.3 V1068.2 L23.6 1066.9Z" fill="#fff"/>
<rect x="65.2" y="1055.6" width="9" height="8.8" stroke="#fff" stroke-width="1.3"/><path d="M64 1052.9 H75.4 M64 1067 H75.4 M64.6 1052.9 V1054.4 M74.8 1052.9 V1054.4 M64.6 1065.6 V1067 M74.8 1065.6 V1067" stroke="#fff" stroke-width="1.2"/><path d="M78.2 1052.4 V1054.8 M78.2 1060.8 V1067.2" stroke="#fff" stroke-width="1.3"/><rect x="77" y="1056.8" width="2.6" height="2.6" fill="#fff"/>
<circle cx="122.7" cy="1060" r="11.4" fill="#DB4437"/><path d="M122.7 1060 L112.8 1054.3 A11.4 11.4 0 0 0 117 1069.9 L122.7 1060Z" fill="#0F9D58"/><path d="M122.7 1060 L117 1069.9 A11.4 11.4 0 0 0 132.6 1054.3 L122.7 1060Z" fill="#FFCD40"/><path d="M112.8 1054.3 A11.4 11.4 0 0 1 132.6 1054.3 L122.7 1054.3Z" fill="#DB4437"/><path d="M117 1069.9 A11.4 11.4 0 0 1 112.8 1054.3 L118.2 1062.6Z" fill="#0F9D58"/><circle cx="122.7" cy="1060" r="5.3" fill="#F1F1F1"/><circle cx="122.7" cy="1060" r="4.1" fill="#4285F4"/>
<path d="M161 1052.4 H168.6 L170.4 1054.4 H182.6 V1068.6 H161Z" fill="#F4C94E"/><path d="M161 1056.4 H182.6 V1068.6 H161Z" fill="#FBE28A"/><path d="M164.6 1062 H179 V1068.6 H175 V1065.6 H168.6 V1068.6 H164.6Z" fill="#3F9FE0"/>
<ellipse cx="218.6" cy="1061.6" rx="10" ry="8.2" fill="#D9E3EA" stroke="#8FA2B0" stroke-width="0.8" transform="rotate(-18 218.6 1061.6)"/><circle cx="213.4" cy="1060" r="1.7" fill="#E0463C"/><circle cx="217" cy="1056.6" r="1.7" fill="#3FA14A"/><circle cx="222" cy="1056.2" r="1.7" fill="#3C78D8"/><circle cx="214.8" cy="1065" r="1.7" fill="#F0B83C"/><ellipse cx="222.4" cy="1064.6" rx="2.4" ry="1.8" fill="#1B1A1A"/><path d="M220 1069.6 L229 1052.6 L231 1053.6 L222.6 1070.6Z" fill="#E8A04A"/><path d="M228.6 1053 L230.6 1049.4 L232 1050.2 L230.8 1054Z" fill="#9A6A3A"/>
<path d="M259.4 1052 L273.4 1049.4 V1071 L259.4 1068.4Z" fill="#D24726"/><rect x="273.4" y="1052.6" width="8.2" height="15.2" fill="#fff"/><rect x="273.4" y="1052.6" width="8.2" height="15.2" stroke="#D24726" stroke-width="0.9"/><path d="M275 1063 H280 M275 1065 H280" stroke="#D24726" stroke-width="0.9"/><path d="M276.8 1055 A2.6 2.6 0 1 0 279.4 1057.6 H276.8Z" fill="#D24726"/><path d="M264 1064.6 V1055.6 H267 Q269.8 1055.6 269.8 1058.4 Q269.8 1061.2 267 1061.2 H264" stroke="#fff" stroke-width="1.6"/>
<circle cx="1668" cy="1054.7" r="2.7" stroke="#fff" stroke-width="1.2"/><circle cx="1661.8" cy="1060.9" r="2.3" stroke="#fff" stroke-width="1.2"/><path d="M1658 1067.4 Q1658.6 1063.8 1661.8 1063.7 Q1665 1063.8 1665.6 1067.4 M1664.6 1060.2 Q1666 1058 1668 1058 Q1671.4 1058.2 1672.2 1062" stroke="#fff" stroke-width="1.2"/>
<path d="M1695.2 1063.2 L1701.2 1057.2 L1707.2 1063.2" stroke="#fff" stroke-width="1.3"/>
<rect x="1721.4" y="1054.6" width="11.4" height="8.6" stroke="#fff" stroke-width="1.2"/><path d="M1723.4 1067 H1730.8 M1727 1063.4 V1067" stroke="#fff" stroke-width="1.2"/><path d="M1717.6 1055.2 H1721 V1060.4 H1717.6Z" fill="#1B1A1A" stroke="#fff" stroke-width="1"/>
<path d="M1741.4 1058.4 H1744 L1747.6 1055 V1066.4 L1744 1063 H1741.4Z" stroke="#fff" stroke-width="1.1"/><path d="M1750 1058.4 Q1751.6 1060.7 1750 1063 M1752.4 1056.4 Q1755 1060.7 1752.4 1065 M1754.8 1054.6 Q1758.4 1060.7 1754.8 1066.8" stroke="#fff" stroke-width="1"/>
<path d="M1879.4 1052.6 H1894.6 V1063.4 H1885 L1882 1066.4 V1063.4 H1879.4Z" fill="#fff"/><path d="M1882 1055.6 H1892 M1882 1058 H1892 M1882 1060.4 H1888" stroke="#1B1A1A" stroke-width="1"/><circle cx="1894.4" cy="1067.4" r="7.4" fill="#2A2A2A" stroke="#9A9A9A" stroke-width="1.2"/>
</svg>
<div id="tx">
<span class="t" style="left:883.50px;top:5.66px;font-size:12.25px;color:#fff;letter-spacing:-0.308px;-webkit-text-stroke:0.15px;">Presentation1</span>
<span class="t" style="left:961.80px;top:5.66px;font-size:12.25px;color:#fff;-webkit-text-stroke:0.15px;">-</span>
<span class="t" style="left:972.60px;top:5.66px;font-size:12.25px;color:#fff;letter-spacing:-0.136px;-webkit-text-stroke:0.15px;">PowerPoint</span>
<span class="t" style="left:1658.50px;top:5.36px;font-size:12.25px;color:#fff;letter-spacing:-0.383px;-webkit-text-stroke:0.15px;">Lenny Hayes</span>
<span class="t" style="left:19.60px;top:38.66px;font-size:12.25px;color:#fff;letter-spacing:-0.283px;-webkit-text-stroke:0.15px;">File</span>
<span class="t" style="left:72.75px;top:38.66px;font-size:12.25px;color:#B7472A;letter-spacing:0.417px;-webkit-text-stroke:0.15px;">Home</span>
<span class="t" style="left:132.38px;top:38.66px;font-size:12.25px;color:#fff;letter-spacing:-0.200px;-webkit-text-stroke:0.15px;">Insert</span>
<span class="t" style="left:188.75px;top:38.66px;font-size:12.25px;color:#fff;letter-spacing:-0.330px;-webkit-text-stroke:0.15px;">Design</span>
<span class="t" style="left:252.05px;top:38.66px;font-size:12.25px;color:#fff;letter-spacing:-0.218px;-webkit-text-stroke:0.15px;">Transitions</span>
<span class="t" style="left:336.00px;top:38.66px;font-size:12.25px;color:#fff;letter-spacing:0.050px;-webkit-text-stroke:0.15px;">Animations</span>
<span class="t" style="left:423.50px;top:38.66px;font-size:12.25px;color:#fff;letter-spacing:-0.417px;-webkit-text-stroke:0.15px;">Slide Show</span>
<span class="t" style="left:507.30px;top:38.66px;font-size:12.25px;color:#fff;letter-spacing:-0.570px;-webkit-text-stroke:0.15px;">Review</span>
<span class="t" style="left:572.00px;top:38.66px;font-size:12.25px;color:#fff;letter-spacing:-0.558px;-webkit-text-stroke:0.15px;">View</span>
<span class="t" style="left:623.30px;top:38.66px;font-size:12.25px;color:#fff;letter-spacing:0.083px;-webkit-text-stroke:0.15px;">Help</span>
<span class="t" style="left:704.05px;top:38.66px;font-size:12.25px;color:#fff;letter-spacing:0.008px;-webkit-text-stroke:0.15px;">Tell me what you want to do</span>
<span class="t" style="left:1866.50px;top:38.66px;font-size:12.25px;color:#fff;letter-spacing:-0.688px;-webkit-text-stroke:0.15px;">Share</span>
<span class="t" style="left:14.62px;top:102.93px;font-size:11.75px;color:#3A3A3A;letter-spacing:-0.238px;-webkit-text-stroke:0.15px;">Paste</span>
<span class="t" style="left:72.00px;top:68.73px;font-size:11.75px;color:#A3A3A3;letter-spacing:0.475px;">Cut</span>
<span class="t" style="left:72.00px;top:91.63px;font-size:11.75px;color:#A3A3A3;letter-spacing:0.208px;">Copy</span>
<span class="t" style="left:71.62px;top:114.63px;font-size:11.75px;color:#A3A3A3;letter-spacing:0.067px;">Format Painter</span>
<span class="t" style="left:47.80px;top:137.73px;font-size:11.75px;color:#3A3A3A;letter-spacing:0.159px;-webkit-text-stroke:0.15px;">Clipboard</span>
<span class="t" style="left:181.62px;top:102.93px;font-size:11.75px;color:#3A3A3A;letter-spacing:0.275px;-webkit-text-stroke:0.15px;">New</span>
<span class="t" style="left:176.50px;top:118.63px;font-size:11.75px;color:#3A3A3A;letter-spacing:-0.062px;-webkit-text-stroke:0.15px;">Slide</span>
<span class="t" style="left:236.62px;top:68.73px;font-size:11.75px;color:#3A3A3A;letter-spacing:0.225px;-webkit-text-stroke:0.15px;">Layout</span>
<span class="t" style="left:236.62px;top:91.63px;font-size:11.75px;color:#3A3A3A;letter-spacing:-0.562px;-webkit-text-stroke:0.15px;">Reset</span>
<span class="t" style="left:237.00px;top:114.63px;font-size:11.75px;color:#3A3A3A;-webkit-text-stroke:0.15px;">Section</span>
<span class="t" style="left:215.80px;top:137.73px;font-size:11.75px;color:#3A3A3A;letter-spacing:-0.385px;-webkit-text-stroke:0.15px;">Slides</span>
<span class="t" style="left:407.93px;top:76.63px;font-size:11.75px;color:#A3A3A3;letter-spacing:-0.550px;">18</span>
<span class="t" style="left:312.75px;top:106.67px;font-size:12.5px;color:#A3A3A3;font-weight:bold;">B</span>
<span class="t" style="left:337.12px;top:106.50px;font-size:13px;color:#A3A3A3;font-weight:bold;font-style:italic;font-family:'Liberation Serif',serif;">I</span>
<span class="t" style="left:356.62px;top:106.93px;font-size:11.75px;color:#A3A3A3;-webkit-text-stroke:0.4px;">U</span>
<span class="t" style="left:379.75px;top:106.67px;font-size:12.5px;color:#A3A3A3;font-weight:bold;text-shadow:1px 1px 1.5px #bbb;">S</span>
<span class="t" style="left:398.12px;top:107.19px;font-size:11px;color:#A3A3A3;letter-spacing:-0.812px;-webkit-text-stroke:0.3px;">abc</span>
<span class="t" style="left:420.50px;top:104.79px;font-size:11px;color:#A3A3A3;letter-spacing:1.125px;-webkit-text-stroke:0.3px;">AV</span>
<span class="t" style="left:453.50px;top:106.93px;font-size:11.75px;color:#A3A3A3;letter-spacing:-0.300px;-webkit-text-stroke:0.35px;">Aa</span>
<span class="t" style="left:498.50px;top:106.65px;font-size:14px;color:#A3A3A3;-webkit-text-stroke:0.4px;">A</span>
<span class="t" style="left:457.30px;top:76.82px;font-size:13.5px;color:#A3A3A3;-webkit-text-stroke:0.3px;">A</span>
<span class="t" style="left:480.00px;top:77.86px;font-size:10.5px;color:#A3A3A3;-webkit-text-stroke:0.3px;">A</span>
<span class="t" style="left:395.43px;top:137.73px;font-size:11.75px;color:#3A3A3A;letter-spacing:0.258px;-webkit-text-stroke:0.15px;">Font</span>
<span class="t" style="left:727.45px;top:68.73px;font-size:11.75px;color:#A3A3A3;letter-spacing:0.042px;">Text Direction</span>
<span class="t" style="left:727.70px;top:91.63px;font-size:11.75px;color:#A3A3A3;letter-spacing:0.028px;">Align Text</span>
<span class="t" style="left:727.20px;top:114.63px;font-size:11.75px;color:#A3A3A3;letter-spacing:0.108px;">Convert to SmartArt</span>
<span class="t" style="left:659.73px;top:137.73px;font-size:11.75px;color:#3A3A3A;letter-spacing:-0.184px;-webkit-text-stroke:0.15px;">Paragraph</span>
<span class="t" style="left:1007.20px;top:102.63px;font-size:11.75px;color:#3A3A3A;letter-spacing:0.121px;-webkit-text-stroke:0.15px;">Arrange</span>
<span class="t" style="left:1057.90px;top:102.63px;font-size:11.75px;color:#A3A3A3;letter-spacing:0.244px;">Quick</span>
<span class="t" style="left:1054.00px;top:118.53px;font-size:11.75px;color:#A3A3A3;letter-spacing:-0.325px;">Styles</span>
<span class="t" style="left:1116.80px;top:68.73px;font-size:11.75px;color:#A3A3A3;letter-spacing:-0.167px;">Shape Fill</span>
<span class="t" style="left:1116.80px;top:91.63px;font-size:11.75px;color:#A3A3A3;letter-spacing:0.023px;">Shape Outline</span>
<span class="t" style="left:1116.80px;top:114.63px;font-size:11.75px;color:#A3A3A3;letter-spacing:-0.202px;">Shape Effects</span>
<span class="t" style="left:1002.83px;top:137.73px;font-size:11.75px;color:#3A3A3A;letter-spacing:0.179px;-webkit-text-stroke:0.15px;">Drawing</span>
<span class="t" style="left:1241.72px;top:68.73px;font-size:11.75px;color:#3A3A3A;letter-spacing:0.075px;-webkit-text-stroke:0.15px;">Find</span>
<span class="t" style="left:1241.72px;top:91.63px;font-size:11.75px;color:#3A3A3A;letter-spacing:-0.246px;-webkit-text-stroke:0.15px;">Replace</span>
<span class="t" style="left:1242.10px;top:114.63px;font-size:11.75px;color:#3A3A3A;letter-spacing:-0.345px;-webkit-text-stroke:0.15px;">Select</span>
<span class="t" style="left:1241.72px;top:137.73px;font-size:11.75px;color:#3A3A3A;letter-spacing:0.238px;-webkit-text-stroke:0.15px;">Editing</span>
<span class="t" style="left:509.30px;top:74.19px;font-size:11px;color:#A9A9A9;-webkit-text-stroke:0.25px;">A</span>
<span class="t" style="left:716.30px;top:65.31px;font-size:9.5px;color:#A9A9A9;-webkit-text-stroke:0.25px;">A</span>
<span class="t" style="left:1222.62px;top:86.94px;font-size:10px;color:#555555;-webkit-text-stroke:0.35px;">a</span>
<span class="t" style="left:1228.58px;top:86.94px;font-size:10px;color:#8B4FB5;-webkit-text-stroke:0.35px;">b</span>
<span class="t" style="left:1227.83px;top:94.03px;font-size:10px;color:#555555;-webkit-text-stroke:0.35px;">a</span>
<span class="t" style="left:1233.62px;top:94.03px;font-size:10px;color:#3B78C3;-webkit-text-stroke:0.35px;">c</span>
<span class="t" style="left:444.88px;top:312.38px;font-size:24.0px;color:#000;letter-spacing:-0.083px;-webkit-text-stroke:0.25px;">Clip</span>
<span class="t" style="left:723.42px;top:277.78px;font-size:24.0px;color:#000;letter-spacing:0.688px;-webkit-text-stroke:0.25px;">Mini “Push” T-valve</span>
<span class="t" style="left:723.80px;top:309.38px;font-size:24.0px;color:#000;letter-spacing:0.188px;-webkit-text-stroke:0.25px;">keeps pressure in</span>
<span class="t" style="left:724.30px;top:342.28px;font-size:24.0px;color:#000;letter-spacing:0.717px;-webkit-text-stroke:0.25px;">chamber</span>
<span class="t" style="left:336.50px;top:773.58px;font-size:24.0px;color:#000;letter-spacing:0.292px;-webkit-text-stroke:0.25px;">Trigger impinges</span>
<span class="t" style="left:336.40px;top:805.28px;font-size:24.0px;color:#000;letter-spacing:0.748px;-webkit-text-stroke:0.25px;">direction on T-</span>
<span class="t" style="left:337.20px;top:838.38px;font-size:24.0px;color:#000;letter-spacing:0.075px;-webkit-text-stroke:0.25px;">valve</span>
<span class="t" style="left:1434.42px;top:501.38px;font-size:24.0px;color:#000;letter-spacing:0.405px;-webkit-text-stroke:0.25px;">Piston is pulled</span>
<span class="t" style="left:1435.30px;top:533.38px;font-size:24.0px;color:#000;letter-spacing:0.552px;-webkit-text-stroke:0.25px;">and holds itself</span>
<span class="t" style="left:1434.80px;top:566.38px;font-size:24.0px;color:#000;letter-spacing:0.587px;-webkit-text-stroke:0.25px;">in place under</span>
<span class="t" style="left:1434.80px;top:599.18px;font-size:24.0px;color:#000;letter-spacing:0.261px;-webkit-text-stroke:0.25px;">pressure</span>
<span class="t" style="left:1480.50px;top:203.93px;font-size:23.3px;color:#000;letter-spacing:-0.251px;font-weight:bold;">Basic Function –</span>
<span class="t" style="left:1480.50px;top:235.93px;font-size:23.3px;color:#000;letter-spacing:0.358px;font-weight:bold;">Piston-powered</span>
<span class="t" style="left:1480.50px;top:268.73px;font-size:23.3px;color:#000;letter-spacing:0.368px;font-weight:bold;">BBMG</span>
<span class="t" style="left:1480.47px;top:301.38px;font-size:24.0px;color:#000;letter-spacing:0.127px;-webkit-text-stroke:0.25px;">Cross-sectional</span>
<span class="t" style="left:6.80px;top:1018.63px;font-size:11.75px;color:#3A3A3A;letter-spacing:-0.159px;-webkit-text-stroke:0.15px;">Slide 1 of 1</span>
<span class="t" style="left:114.12px;top:1018.63px;font-size:11.75px;color:#3A3A3A;letter-spacing:-0.114px;-webkit-text-stroke:0.15px;">English (Australia)</span>
<span class="t" style="left:1430.83px;top:1018.63px;font-size:11.75px;color:#3A3A3A;letter-spacing:-0.125px;-webkit-text-stroke:0.15px;">Notes</span>
<span class="t" style="left:1497.80px;top:1018.63px;font-size:11.75px;color:#3A3A3A;letter-spacing:-0.354px;-webkit-text-stroke:0.15px;">Comments</span>
<span class="t" style="left:1859.83px;top:1017.92px;font-size:11.5px;color:#3A3A3A;letter-spacing:-0.458px;-webkit-text-stroke:0.15px;">114%</span>
<span class="t" style="left:1766.42px;top:1050.33px;font-size:11.75px;color:#fff;letter-spacing:-0.938px;-webkit-text-stroke:0.15px;">ENG</span>
<span class="t" style="left:1810.62px;top:1040.93px;font-size:11.75px;color:#fff;letter-spacing:-0.133px;-webkit-text-stroke:0.15px;">5:41 PM</span>
<span class="t" style="left:1805.50px;top:1059.23px;font-size:11.75px;color:#fff;letter-spacing:0.131px;-webkit-text-stroke:0.15px;">2/01/2019</span>
<span class="t" style="left:1891.35px;top:1057.76px;font-size:10.5px;color:#fff;font-weight:bold;-webkit-text-stroke:0.15px;">2</span>
</div>
</div></body></html>
